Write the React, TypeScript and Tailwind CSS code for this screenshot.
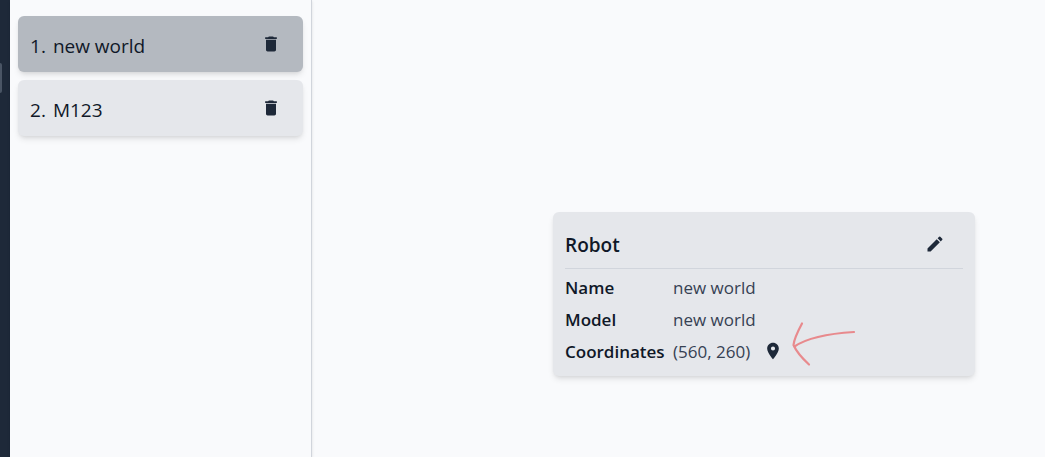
import type { ReactNode } from "react";
import { MdDelete, MdEdit, MdLocationOn } from "react-icons/md";

const robots = [
  { id: 1, name: "new world", selected: true },
  { id: 2, name: "M123", selected: false },
];

function RobotItem({ id, name, selected }: { id: number; name: string; selected: boolean }) {
  return (
    <li
      className={`flex h-14 items-center justify-between rounded-md px-3 shadow-md ${
        selected ? "bg-[#b4b9c0]" : "bg-[#e5e7eb]"
      }`}
    >
      <a href="#robot" className="flex gap-[7px] pt-1 text-[19px] leading-7 text-gray-900">
        <span>{id}.</span>
        <span>{name}</span>
      </a>
      <button type="button" aria-label={`Delete ${name}`} className="px-2.5 py-1 text-xl text-gray-800">
        <MdDelete />
      </button>
    </li>
  );
}

function Detail({ label, children }: { label: string; children: ReactNode }) {
  return (
    <div className="flex h-8 items-center">
      <dt className="w-27 shrink-0 font-semibold text-gray-900">{label}</dt>
      <dd className="flex items-center text-gray-700">{children}</dd>
    </div>
  );
}

function HandArrow() {
  return (
    <svg
      aria-hidden="true"
      viewBox="0 0 64 46"
      className="pointer-events-none absolute right-[119px] bottom-2 h-[46px] w-16 fill-none stroke-[#e88a8d]"
      strokeWidth="2.2"
      strokeLinecap="round"
      strokeLinejoin="round"
    >
      <path d="M10 1.500C6 9 2 18 1.500 23C5 31 11 37 17 42.500" />
      <path d="M2.500 24.500C12 18 30 12 62 10" />
    </svg>
  );
}

export default function App() {
  return (
    <div className="flex min-h-screen bg-[#f9fafc] font-['Open_Sans','Noto_Sans',sans-serif]">
      <nav className="w-2.5 shrink-0 bg-gray-800 pt-[63px]">
        <div className="h-[30px] w-0.5 rounded-r-sm bg-gray-600" />
      </nav>
      <aside className="w-[302px] shrink-0 border-r border-gray-300 px-2 py-4 shadow-sm">
        <ul className="flex flex-col gap-2">
          {robots.map((robot) => (
            <RobotItem key={robot.id} {...robot} />
          ))}
        </ul>
      </aside>
      <main className="flex flex-1 items-start justify-end pt-[212px] pr-[70px]">
        <section id="robot" className="relative w-[422px] rounded-md bg-[#e5e7eb] px-3 pb-2 shadow-md">
          <header className="flex h-[57px] items-center justify-between border-b border-gray-300 pt-2">
            <h2 className="pt-0.5 text-[19px] leading-7 font-semibold text-gray-900">Robot</h2>
            <button type="button" aria-label="Edit robot" className="px-[18px] py-1 text-xl text-gray-800">
              <MdEdit />
            </button>
          </header>
          <dl className="pt-[3px] text-[17px] leading-7">
            <Detail label="Name">new world</Detail>
            <Detail label="Model">new world</Detail>
            <Detail label="Coordinates">
              (560, 260)
              <button type="button" aria-label="Show on map" className="ml-[13px] pb-0.5 text-xl text-gray-800">
                <MdLocationOn />
              </button>
            </Detail>
          </dl>
          <HandArrow />
        </section>
      </main>
    </div>
  );
}
